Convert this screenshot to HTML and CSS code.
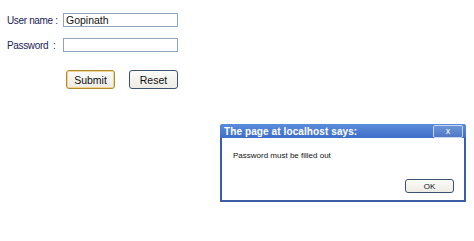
FILE: index.html
```html
<!DOCTYPE html>
<html>
<head>
<meta charset="utf-8">
<link rel="stylesheet" href="styles.css">
</head>
<body>
<form class="login">
  <div class="row">
    <label class="lbl">User name :</label>
    <div class="field">Gopinath</div>
  </div>
  <div class="row">
    <label class="lbl">Password &nbsp;:</label>
    <div class="field"></div>
  </div>
  <div class="actions">
    <button type="button" class="btn btn-focus">Submit</button>
    <button type="button" class="btn">Reset</button>
  </div>
</form>

<div class="dialog">
  <div class="titlebar">
    <span class="title">The page at localhost says:</span>
    <span class="close">x</span>
  </div>
  <div class="dbody">
    <p class="msg">Password must be filled out</p>
    <div class="dactions">
      <button type="button" class="okbtn">OK</button>
    </div>
  </div>
</div>
</body>
</html>
```
FILE: styles.css
```css
html, body {
  margin: 0;
  padding: 0;
  background: #ffffff;
  width: 474px;
  height: 241px;
  overflow: hidden;
  font-family: "Liberation Sans", Arial, sans-serif;
}
body { position: relative; }

.login {
  padding: 13px 0 0 7px;
  display: flex;
  flex-direction: column;
}
.row {
  display: flex;
  align-items: center;
  height: 14px;
  margin-bottom: 11px;
}
.lbl {
  width: 56px;
  flex-shrink: 0;
  white-space: nowrap;
  font-size: 10px;
  letter-spacing: -0.35px;
  color: #23235a;
}
.field {
  width: 111px;
  height: 12px;
  border: 1px solid #8fa4bd;
  font-size: 10.5px;
  line-height: 12px;
  padding-left: 2px;
  color: #111;
  background: #fff;
}
.actions {
  display: flex;
  gap: 14px;
  margin: 7px 0 0 59px;
}
.btn {
  width: 49px;
  height: 19px;
  padding: 0;
  font-family: "Liberation Sans", Arial, sans-serif;
  font-size: 10.5px;
  color: #111;
  border: 1px solid #3d5470;
  border-radius: 3px;
  background: linear-gradient(#fbfbf9, #ecebe4);
}
.btn-focus {
  border: 1px solid #b08a30;
  box-shadow: inset 0 0 0 1px #f2d48e;
}

.dialog {
  position: absolute;
  left: 220px;
  top: 124px;
  width: 246px;
  height: 78px;
  background: #3c5ea6;
  border-radius: 3px 3px 0 0;
  display: flex;
  flex-direction: column;
  box-sizing: border-box;
  padding: 0 2px 2px 2px;
}
.titlebar {
  height: 14px;
  display: flex;
  align-items: center;
  justify-content: space-between;
  background: linear-gradient(#5b8ddc, #3e6ec8);
  margin: 0 -2px;
  padding: 0 3px 0 4px;
  border-radius: 3px 3px 0 0;
}
.title {
  color: #fff;
  font-weight: bold;
  font-size: 10px;
  letter-spacing: 0.1px;
}
.close {
  width: 28px;
  height: 11px;
  border: 1px solid #c9d6ee;
  border-radius: 2px;
  background: linear-gradient(#6b95d8, #4e78c4);
  color: #fff;
  font-size: 9px;
  line-height: 10px;
  text-align: center;
}
.dbody {
  flex: 1;
  background: #fff;
  display: flex;
  flex-direction: column;
  padding: 0 10px 0 11px;
}
.msg {
  margin: 13px 0 0 0;
  font-size: 8px;
  color: #111;
}
.dactions {
  margin-top: auto;
  margin-bottom: 7px;
  display: flex;
  justify-content: flex-end;
}
.okbtn {
  width: 49px;
  height: 14px;
  padding: 0;
  font-family: "Liberation Sans", Arial, sans-serif;
  font-size: 8px;
  color: #111;
  border: 1px solid #3d5470;
  border-radius: 3px;
  background: linear-gradient(#fbfbf9, #ecebe4);
}
```
